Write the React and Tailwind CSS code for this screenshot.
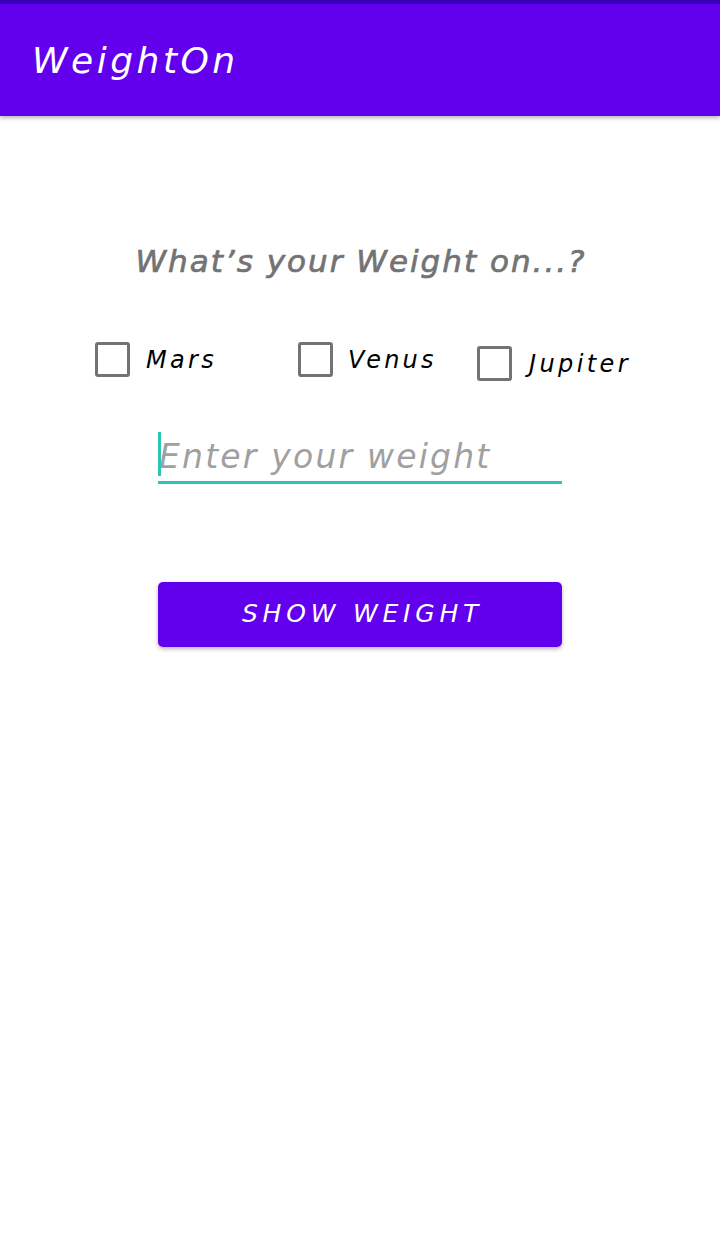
export default function App() {
  const font = { fontFamily: '"DejaVu Sans", "Noto Sans", sans-serif' };
  const Box = ({ extra = "" }) => (
    <span className={`block w-[35px] h-[35px] border-[3px] border-[#737373] rounded-[3px] ${extra}`} />
  );
  return (
    <div className="w-[720px] h-[1237px] bg-white flex flex-col" style={font}>
      <div className="h-[4px] bg-[#3a00b8]" />
      <div className="h-[112px] bg-[#6200ee] flex items-center pl-[32px] shadow-[0_2px_4px_rgba(0,0,0,0.3)] relative z-10">
        <span className="text-white italic text-[36px] tracking-[3.5px] font-light mt-[2px]">WeightOn</span>
      </div>
      <div className="flex flex-col items-center">
        <div className="mt-[122px] text-[#737373] italic text-[31px] tracking-[2px] pl-[2px] [-webkit-text-stroke:0.7px_#737373]">
          What’s your Weight on...?
        </div>
        <div className="mt-[57px] w-full flex items-start pl-[95px]">
          <div className="flex items-center w-[203px]">
            <Box />
            <span className="ml-[16px] italic text-[24px] tracking-[3.3px] text-black">Mars</span>
          </div>
          <div className="flex items-center w-[179px]">
            <Box />
            <span className="ml-[15px] italic text-[24px] tracking-[3.2px] text-black">Venus</span>
          </div>
          <div className="flex items-center mt-[4px]">
            <Box />
            <span className="ml-[17px] italic text-[24px] tracking-[3.4px] text-black">Jupiter</span>
          </div>
        </div>
        <div className="mt-[50px] w-[404px] relative border-b-[3px] border-[#2ac7b8] h-[52px] flex items-start">
          <span className="absolute left-0 top-0 w-[3px] h-[44px] bg-[#2ac7b8]" />
          <span className="italic text-[#a0a0a0] text-[33px] tracking-[2.2px] leading-[44px] pl-[1px] mt-[3px]">
            Enter your weight
          </span>
        </div>
        <button className="mt-[98px] w-[404px] h-[65px] bg-[#6200ee] rounded-[5px] shadow-[0_2px_4px_rgba(0,0,0,0.3)] text-white italic text-[25px] tracking-[4.8px] pl-[5px]">
          SHOW WEIGHT
        </button>
      </div>
    </div>
  );
}
